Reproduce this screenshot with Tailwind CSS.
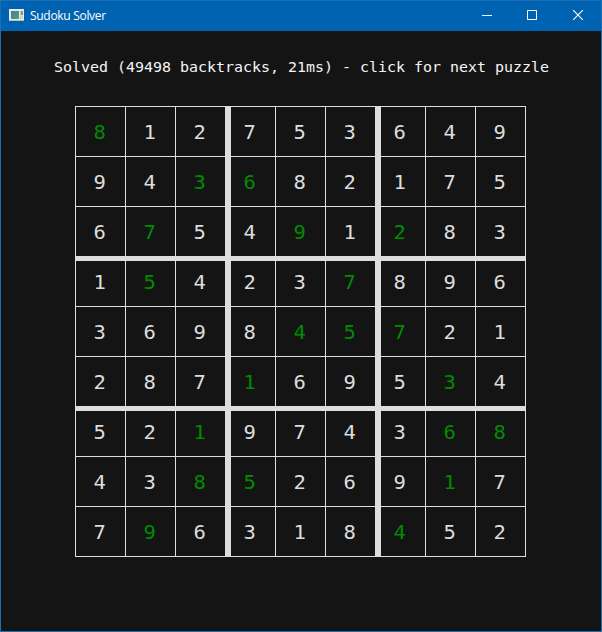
<!DOCTYPE html>
<html lang="en">
<head>
<meta charset="utf-8">
<title>Sudoku Solver</title>
<script src="https://cdn.jsdelivr.net/npm/@tailwindcss/browser@4"></script>
</head>
<body class="bg-[#141414]">
<div class="flex h-[632px] w-[602px] flex-col overflow-hidden border border-[#1a6fb8] bg-[#141414]">
  <header class="flex h-[30px] shrink-0 items-center bg-[#0063b1] text-white">
    <svg class="ml-2 shrink-0" width="16" height="16" viewBox="0 0 16 16" shape-rendering="crispEdges">
      <defs><linearGradient id="pane" x1="0" y1="0" x2="1" y2="1"><stop offset="0" stop-color="#4a79a8"/><stop offset="1" stop-color="#4fa36c"/></linearGradient></defs>
      <rect x="0" y="1" width="15" height="12" fill="#e9e9e6"/>
      <rect x="0" y="12" width="15" height="1" fill="#b9bcbd"/>
      <rect x="2" y="3" width="8" height="8" fill="url(#pane)"/>
      <rect x="11" y="3" width="1" height="8" fill="#c4c8c8"/>
      <rect x="12" y="3" width="2" height="4" fill="#7f9590"/>
      <rect x="12" y="8" width="2" height="3" fill="#d2d3cf"/>
    </svg>
    <h1 class="ml-[5px] whitespace-nowrap font-['Open_Sans',sans-serif] text-[12px] leading-4 tracking-[-0.3px]">Sudoku Solver</h1>
    <div class="ml-auto flex h-full">
      <button class="flex w-[44px] items-center justify-center" aria-label="Minimize"><svg width="10" height="10" viewBox="0 0 10 10" shape-rendering="crispEdges"><path d="M0 4h10v1H0z" fill="#fff"/></svg></button>
      <button class="flex w-[46px] items-center justify-center" aria-label="Maximize"><svg class="-mt-px mb-px" width="10" height="10" viewBox="0 0 10 10" fill="none" stroke="#fff"><path d="M.5.5h9v9h-9z"/></svg></button>
      <button class="flex w-[46px] items-center justify-center" aria-label="Close"><svg class="-mt-px mb-px" width="10" height="10" viewBox="0 0 10 10" fill="none" stroke="#fff" stroke-width="1.1"><path d="M0 0l10 10M10 0L0 10"/></svg></button>
    </div>
  </header>
  <main class="flex flex-col font-['DejaVu_Sans_Mono',monospace]">
    <p class="mt-[26px] ml-[53px] h-5 w-max origin-left scale-x-[1.068] whitespace-pre text-[14px] leading-5 text-[#f5f5f5]">Solved (49498 backtracks, 21ms) - click for next puzzle</p>
    <div id="board" class="mt-[29px] ml-[74px] grid w-[451px] grid-cols-[repeat(9,50px)] border-r border-b border-[#dddddd] text-[19px] text-[#dddddd]"></div>
  </main>
</div>
<script>
  const solution = ["812753649","943682175","675491283","154237896","369845721","287169534","521974368","438526917","796318452"];
  const givens = ["100000000","001100000","010010100","010001000","000011100","000100010","001000011","001100010","010000100"];
  const board = document.getElementById("board");
  const rules = {
    thin: "shadow-[inset_1px_1px_0_#dddddd]",
    col: "shadow-[inset_6px_1px_0_#dddddd]",
    row: "shadow-[inset_1px_5px_0_#dddddd]",
    both: "shadow-[inset_6px_5px_0_#dddddd]"
  };
  solution.forEach((line, r) => [...line].forEach((digit, c) => {
    const thickCol = c === 3 || c === 6, thickRow = r === 3 || r === 6;
    const cell = document.createElement("div");
    const rule = thickCol ? (thickRow ? rules.both : rules.col) : (thickRow ? rules.row : rules.thin);
    cell.className = "flex h-[50px] items-center justify-center pt-[2px] leading-6 " + rule + (givens[r][c] === "1" ? " text-[#008c00]" : "");
    const label = document.createElement("span");
    label.className = "scale-x-[1.08]";
    label.textContent = digit;
    cell.append(label);
    board.append(cell);
  }));
</script>
</body>
</html>
